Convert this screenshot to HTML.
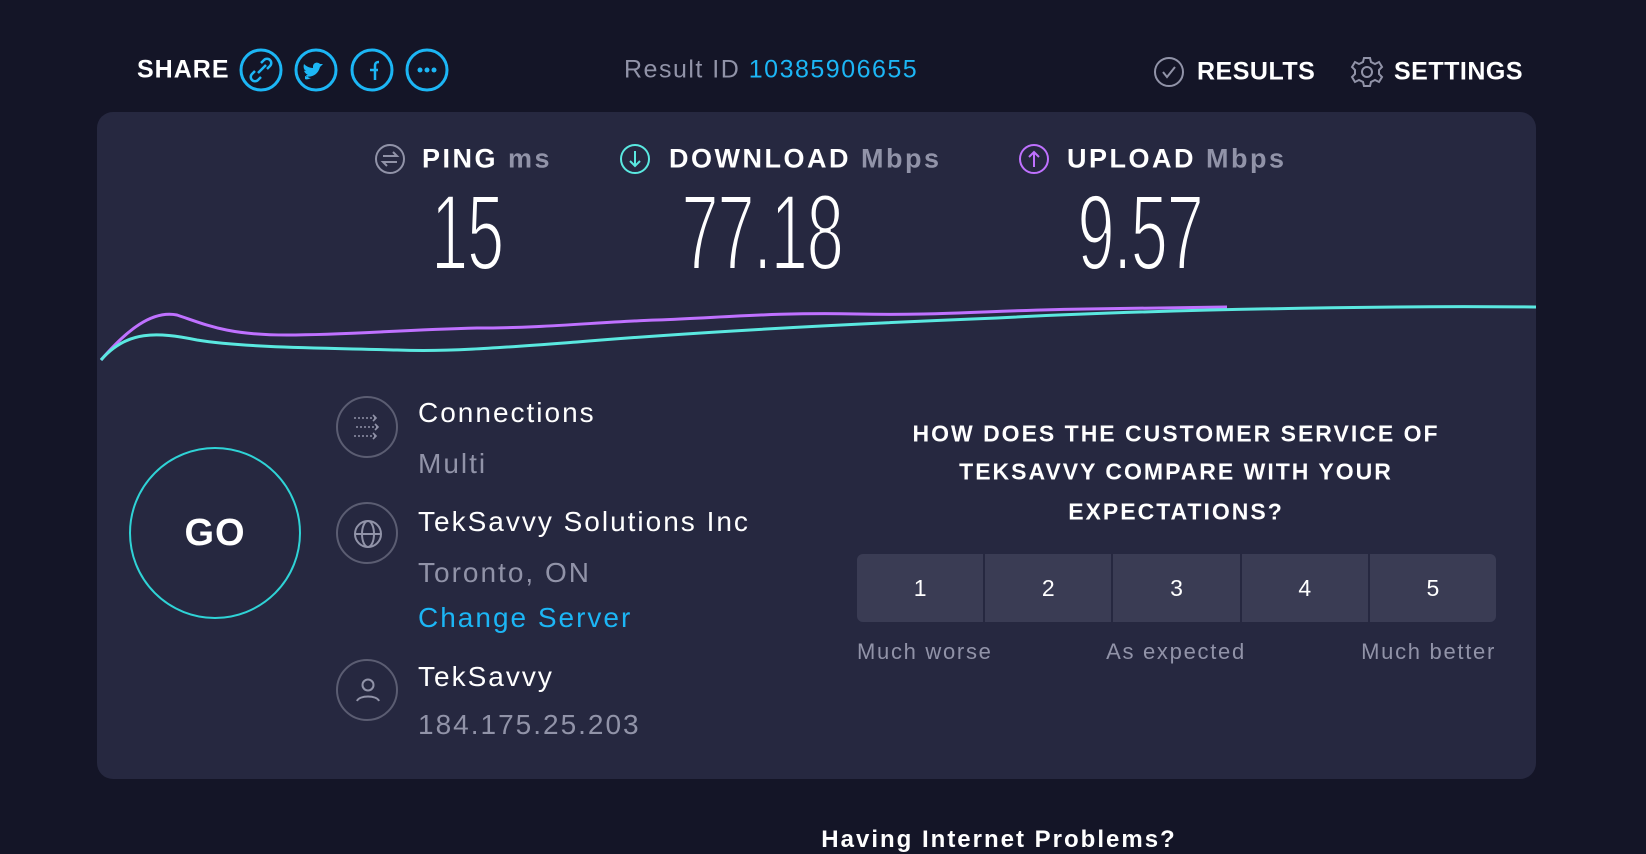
<!DOCTYPE html>
<html><head><meta charset="utf-8"><style>
*{margin:0;padding:0;box-sizing:border-box}
body{width:1646px;height:852px;background:#141527;font-family:"Liberation Sans",sans-serif;color:#fff;position:relative;overflow:hidden}
.a{position:absolute;white-space:nowrap}
.card{position:absolute;left:97px;top:112px;width:1439px;height:667px;background:#262840;border-radius:16px}
.hdr{font-weight:bold;font-size:27px;transform:translateY(-50%);letter-spacing:2.5px}
.hdr span{color:#9193a8}
.num{font-size:108px;font-weight:normal;transform:translate(-50%,-50%) scaleX(0.62);font-family:"Liberation Sans Narrow","Liberation Sans",sans-serif;letter-spacing:-2px;-webkit-text-stroke:3px #262840;paint-order:stroke fill}
.num{paint-order:normal}
.lbl{font-size:28px;transform:translateY(-50%);letter-spacing:2px}
.g{color:#9193a8}
.ic{position:absolute;width:62px;height:62px;border:2px solid #5b5d72;border-radius:50%}
.q{font-weight:bold;font-size:23px;transform:translate(-50%,-50%);letter-spacing:2px}
.btns{position:absolute;left:857px;top:554px;width:639px;height:68px;display:flex;gap:2px;border-radius:6px;overflow:hidden}
.btns div{flex:1;background:#3a3c54;display:flex;align-items:center;justify-content:center;font-size:23px}
.sm{font-size:22px;letter-spacing:1.7px}
</style></head><body>
<div class="a hdr" style="left:137px;top:70px;font-size:25px;letter-spacing:1px">SHARE</div>
<svg class="a" style="left:239px;top:47px" width="210" height="46" viewBox="0 0 210 46" fill="none" stroke="#1cb6f5" stroke-width="3">
<circle cx="22" cy="23" r="20"/><circle cx="77" cy="23" r="20"/><circle cx="133" cy="23" r="20"/><circle cx="188" cy="23" r="20"/>
<path d="M19 26l8-8M16 24l-3 3a4 4 0 0 0 6 6l3-3M28 22l3-3a4 4 0 0 0-6-6l-3 3" stroke-width="2.5"/>
<path d="M66 29c6 2 13-1 15-9l3-3-3 0c-2-2-6-2-7 2v2c-4 0-7-2-9-4-1 3 0 6 2 7-1 0-2 0-2-1 0 2 2 4 4 5-1 0-2 0-2 0 1 2 3 3 5 3-2 1-4 2-6 1" fill="#1cb6f5" stroke="none"/>
<path d="M136 33v-14c0-3 1-4 4-4M131 23h8" stroke-width="2.5"/>
<circle cx="181" cy="23" r="2.5" fill="#1cb6f5" stroke="none"/><circle cx="188" cy="23" r="2.5" fill="#1cb6f5" stroke="none"/><circle cx="195" cy="23" r="2.5" fill="#1cb6f5" stroke="none"/>
</svg>
<div class="a" style="left:624px;top:70px;font-size:25px;transform:translateY(-50%);color:#9193a8;letter-spacing:1.5px">Result ID <span style="color:#1cb6f5">10385906655</span></div>
<svg class="a" style="left:1153px;top:56px" width="32" height="32" fill="none" stroke="#9193a8" stroke-width="2"><circle cx="16" cy="16" r="14"/><path d="M10 16l4 5 8-10"/></svg>
<div class="a hdr" style="left:1197px;top:72px;font-size:25px;letter-spacing:0.5px">RESULTS</div>
<svg class="a" style="left:1350px;top:55px" width="34" height="34" fill="none" stroke="#9193a8" stroke-width="2"><circle cx="17" cy="17" r="5"/><path d="M14 3h6l1 4 4 2 4-2 3 5-3 3v4l3 3-3 5-4-2-4 2-1 4h-6l-1-4-4-2-4 2-3-5 3-3v-4l-3-3 3-5 4 2 4-2z"/></svg>
<div class="a hdr" style="left:1394px;top:72px;font-size:25px;letter-spacing:0.5px">SETTINGS</div>
<div class="card"></div>
<svg class="a" style="left:374px;top:143px" width="32" height="32" fill="none" stroke="#9193a8" stroke-width="2"><circle cx="16" cy="16" r="14"/><path d="M9 13h14l-4-4M23 19H9l4 4"/></svg>
<div class="a hdr" style="left:422px;top:159px">PING <span>ms</span></div>
<svg class="a" style="left:619px;top:143px" width="32" height="32" fill="none" stroke="#5ae8e0" stroke-width="2"><circle cx="16" cy="16" r="14"/><path d="M16 8v15M11 18l5 5 5-5"/></svg>
<div class="a hdr" style="left:669px;top:159px">DOWNLOAD <span>Mbps</span></div>
<svg class="a" style="left:1018px;top:143px" width="32" height="32" fill="none" stroke="#bf71ff" stroke-width="2"><circle cx="16" cy="16" r="14"/><path d="M16 24V9M11 14l5-5 5 5"/></svg>
<div class="a hdr" style="left:1067px;top:159px">UPLOAD <span>Mbps</span></div>
<div class="a num" style="left:467px;top:232px">15</div>
<div class="a num" style="left:762px;top:232px">77.18</div>
<div class="a num" style="left:1140px;top:232px">9.57</div>
<svg class="a" style="left:97px;top:290px" width="1439" height="80" fill="none" stroke-width="3">
<path d="M4 70C30 40 55 20 80 25C110 35 130 45 190 45C250 45 300 40 380 38C450 38 500 32 560 30C620 28 680 22 760 24C840 26 900 20 990 19C1050 18 1100 17 1130 17" stroke="#bf71ff"/>
<path d="M4 70C30 40 60 42 100 50C150 58 230 58 300 60C350 62 400 58 480 52C600 42 750 34 900 28C1050 20 1200 18 1300 17C1380 16 1420 17 1439 17" stroke="#5ae8e0"/>
</svg>
<div class="a" style="left:129px;top:447px;width:172px;height:172px;border-radius:50%;border:2px solid #2fd3d6;display:flex;align-items:center;justify-content:center;font-size:38px;font-weight:bold;letter-spacing:1px">GO</div>
<div class="ic" style="left:336px;top:396px"></div>
<svg class="a" style="left:352px;top:412px" width="32" height="30" fill="none" stroke="#9193a8" stroke-width="1.6" stroke-dasharray="2 2"><path d="M2 6h22M4 15h22M2 24h22"/><path d="M21 3l3 3-3 3M23 12l3 3-3 3M21 21l3 3-3 3" stroke-dasharray="none"/></svg>
<div class="ic" style="left:336px;top:502px"></div>
<svg class="a" style="left:352px;top:518px" width="32" height="32" fill="none" stroke="#9193a8" stroke-width="2"><circle cx="16" cy="16" r="13"/><ellipse cx="16" cy="16" rx="6" ry="13"/><path d="M3 16h26"/></svg>
<div class="ic" style="left:336px;top:659px"></div>
<svg class="a" style="left:352px;top:675px" width="32" height="32" fill="none" stroke="#9193a8" stroke-width="2"><circle cx="16" cy="10" r="5.5"/><path d="M5 26c2-6 20-6 22 0"/></svg>
<div class="a lbl" style="left:418px;top:413px">Connections</div>
<div class="a lbl g" style="left:418px;top:464px">Multi</div>
<div class="a lbl" style="left:418px;top:522px">TekSavvy Solutions Inc</div>
<div class="a lbl g" style="left:418px;top:573px">Toronto, ON</div>
<div class="a lbl" style="left:418px;top:618px;color:#1cb6f5">Change Server</div>
<div class="a lbl" style="left:418px;top:677px">TekSavvy</div>
<div class="a lbl g" style="left:418px;top:725px">184.175.25.203</div>
<div class="a q" style="left:1176px;top:434px">HOW DOES THE CUSTOMER SERVICE OF</div>
<div class="a q" style="left:1176px;top:472px">TEKSAVVY COMPARE WITH YOUR</div>
<div class="a q" style="left:1176px;top:512px">EXPECTATIONS?</div>
<div class="btns"><div>1</div><div>2</div><div>3</div><div>4</div><div>5</div></div>
<div class="a g sm" style="left:857px;top:652px;transform:translateY(-50%)">Much worse</div>
<div class="a g sm" style="left:1176px;top:652px;transform:translate(-50%,-50%)">As expected</div>
<div class="a g sm" style="left:1496px;top:652px;transform:translate(-100%,-50%)">Much better</div>
<div class="a" style="left:999px;top:840px;font-size:24px;font-weight:bold;transform:translate(-50%,-50%);letter-spacing:2px">Having Internet Problems?</div>
</body></html>
